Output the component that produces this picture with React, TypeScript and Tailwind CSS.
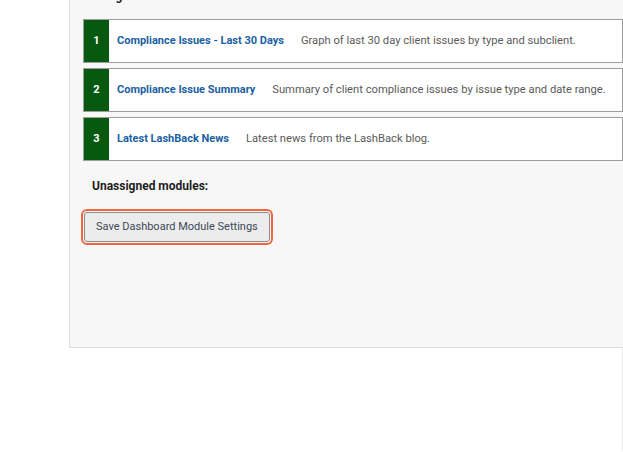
const modules = [
  { n: 1, title: 'Compliance Issues - Last 30 Days', desc: 'Graph of last 30 day client issues by type and subclient.' },
  { n: 2, title: 'Compliance Issue Summary', desc: 'Summary of client compliance issues by issue type and date range.' },
  { n: 3, title: 'Latest LashBack News', desc: 'Latest news from the LashBack blog.' },
]

export default function App() {
  return (
    <div className="w-[623px] h-[452px] bg-white overflow-hidden flex flex-col" style={{ fontFamily: 'Roboto, "Noto Sans", sans-serif' }}>
      <div className="ml-[69px] h-[348px] shrink-0 bg-[#f7f7f7] border-l border-b border-[#dedede] overflow-hidden">
        <div className="pl-[22px] -mt-[11px] h-[14px] text-[12px] leading-[14px] font-bold text-[#222]">Assigned modules:</div>
        <div className="mt-[16px] ml-[13px] flex flex-col gap-[5px]">
          {modules.map((m) => (
            <div key={m.n} className="h-[44px] flex items-stretch border border-[#9d9d9d] bg-white">
              <div className="w-[25px] bg-[#07590f] flex items-center justify-center text-white text-[11px] font-bold">
                {m.n}
              </div>
              <div className="flex items-center pl-[8px] text-[11px] whitespace-nowrap">
                <span className="font-bold text-[#1b5fa3]">{m.title}</span>
                <span className="ml-[17px] text-[11.2px] text-[#5a5a5a]">{m.desc}</span>
              </div>
            </div>
          ))}
        </div>
        <div className="mt-[18px] pl-[22px] text-[12px] leading-[14px] font-bold text-[#1e1e1e]">Unassigned modules:</div>
        <div className="mt-[19px] pl-[14px]">
          <button className="h-[30px] px-[11px] bg-[#ececec] border border-[#8c8c8c] rounded-[3px] text-[11px] text-[#3d4859] outline-2 outline-[#f2663f] outline-offset-[1px]">
            Save Dashboard Module Settings
          </button>
        </div>
      </div>
      <div className="flex-1 w-[623px] border-r border-[#e8e8e8] rounded-br-[4px]" />
    </div>
  )
}
